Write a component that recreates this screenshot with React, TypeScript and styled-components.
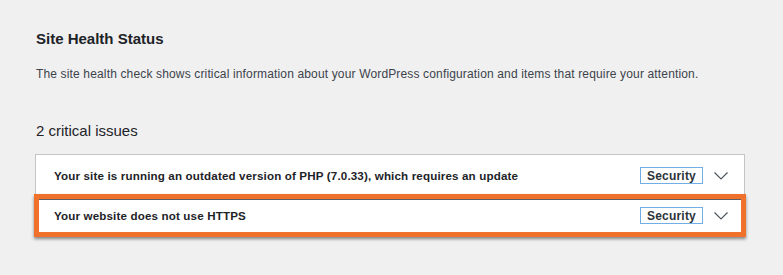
import styled, { createGlobalStyle } from 'styled-components';

const GlobalStyle = createGlobalStyle`
  body {
    margin: 0;
    background: #f0f0f1;
    font-family: "Liberation Sans", Arial, sans-serif;
    color: #1d2327;
  }
`;

const Wrapper = styled.div`
  padding: 29px 38px 0 35px;
  height: 275px;
  box-sizing: border-box;
`;
const Title = styled.h2`
  margin: 0 0 0 1px;
  font-size: 15px;
  font-weight: 700;
  line-height: 20px;
  color: #1d2327;
`;
const Intro = styled.p`
  margin: 17px 0 0 1px;
  font-size: 12px;
  letter-spacing: 0.15px;
  line-height: 16px;
  color: #3c434a;
  white-space: nowrap;
`;
const IssuesCount = styled.h3`
  margin: 39px 0 0 1px;
  font-size: 15px;
  font-weight: 400;
  line-height: 20px;
  color: #1d2327;
`;
const Accordion = styled.div`
  margin-top: 13px;
  background: #fff;
  border: 1px solid #c3c4c7;
  border-bottom: none;
`;
const Item = styled.div<{ highlighted?: boolean }>`
  position: relative;
  display: flex;
  align-items: center;
  height: 40px;
  padding: 2px 16px 0 18px;
  border-bottom: 1px solid #c3c4c7;
  box-sizing: border-box;
  ${(props) =>
    props.highlighted &&
    `
    &::after {
      content: '';
      position: absolute;
      left: -2px;
      right: -2px;
      top: -1px;
      bottom: -3px;
      border: 5px solid #f0712c;
      box-shadow: 0 2px 3px rgba(0, 0, 0, 0.45), inset 0 1px 0 #5c5f62;
      pointer-events: none;
    }
  `}
`;
const ItemTitle = styled.span`
  flex: 1;
  font-size: 11.6px;
  letter-spacing: 0.15px;
  font-weight: 700;
  color: #1d2327;
`;
const Badge = styled.span`
  display: inline-flex;
  align-items: center;
  justify-content: center;
  width: 63px;
  height: 17px;
  box-sizing: border-box;
  border: 1px solid #72aee6;
  font-size: 12px;
  letter-spacing: 0.2px;
  font-weight: 700;
  color: #2c3338;
`;
const Chevron = styled.svg`
  width: 14px;
  height: 8px;
  margin-left: 11px;
  fill: none;
  stroke: #50575e;
  stroke-width: 1.2;
`;

const issues = [
  {
    title:
      'Your site is running an outdated version of PHP (7.0.33), which requires an update',
    badge: 'Security',
  },
  { title: 'Your website does not use HTTPS', badge: 'Security', highlighted: true },
];

function App() {
  return (
    <Wrapper>
      <GlobalStyle />
      <Title>Site Health Status</Title>
      <Intro>
        The site health check shows critical information about your WordPress
        configuration and items that require your attention.
      </Intro>
      <IssuesCount>2 critical issues</IssuesCount>
      <Accordion>
        {issues.map((issue) => (
          <Item key={issue.title} highlighted={issue.highlighted}>
            <ItemTitle>{issue.title}</ItemTitle>
            <Badge>{issue.badge}</Badge>
            <Chevron viewBox="0 0 14 8">
              <path d="M0.5 0.5 L7 7 L13.5 0.5" />
            </Chevron>
          </Item>
        ))}
      </Accordion>
    </Wrapper>
  );
}
export default App;
